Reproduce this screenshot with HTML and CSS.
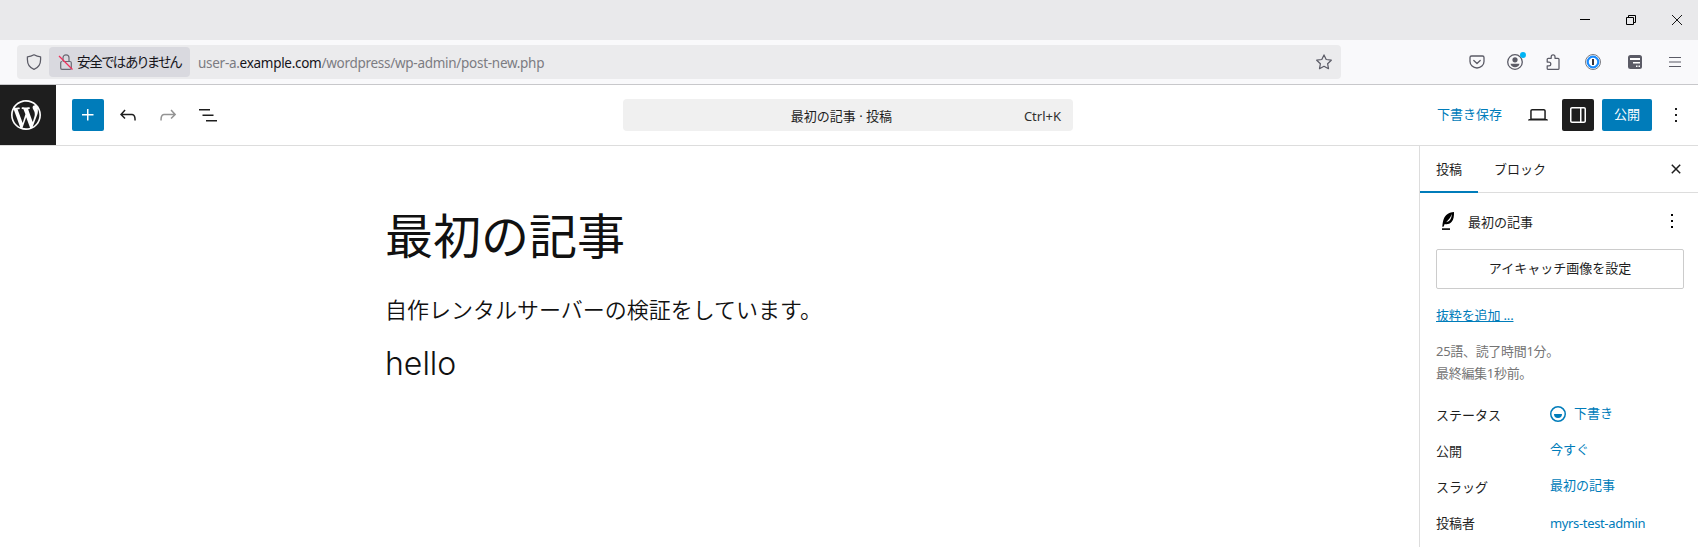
FILE: index.html
```html
<!DOCTYPE html>
<html lang="ja">
<head>
<meta charset="utf-8">
<title>最初の記事</title>
<link rel="stylesheet" href="styles.css">
</head>
<body>
<div class="titlebar">
  <svg width="10" height="10" viewBox="0 0 10 10"><path d="M0 4.5h10" stroke="#000"/></svg>
  <svg width="10" height="10" viewBox="0 0 10 10" fill="none" stroke="#000"><path d="M.5 2.5h7v7h-7zM2.500 2.500v-2h7v7h-2"/></svg>
  <svg width="10" height="10" viewBox="0 0 10 10" stroke="#000" stroke-width=".9"><path d="M0 0l10 10M10 0L0 10"/></svg>
</div>
<div class="navbar">
  <div class="address">
    <svg class="shield" width="16" height="16" viewBox="0 0 16 16" fill="none" stroke="#5b5b66" stroke-width="1.25" stroke-linejoin="round"><path d="M8 .8c2 1.200 4.200 1.900 6.600 2v2.700c0 4.300-2.400 8.300-6.600 9.800-4.200-1.500-6.600-5.500-6.600-9.800V2.800C3.800 2.700 6 2 8 .8z"/></svg>
    <div class="security">
      <svg width="16" height="16" viewBox="0 0 16 16" fill="none" stroke="#6a6a74" stroke-width="1.200"><path d="M5 7.500V3.800a3 3 0 0 1 6 0v3.700M5.500 7.500H12a1.300 1.300 0 0 1 1.300 1.300v5.200a1.300 1.300 0 0 1-1.300 1.300H4a1.300 1.300 0 0 1-1.300-1.300V8.800A1.300 1.300 0 0 1 4 7.500"/><path d="M1 2l13.500 13.500" stroke="#f0305c" stroke-width="1.300"/></svg>
      <span class="security-text">安全ではありません</span>
    </div>
    <span class="url">user-a.<b>example.com</b>/wordpress/wp-admin/post-new.php</span>
    <svg class="star" width="16" height="16" viewBox="0 0 16 16" fill="none" stroke="#5b5b66" stroke-width="1.200" stroke-linejoin="round"><path d="M8 .9l2.200 4.600 5.100.7-3.700 3.500.9 5L8 12.300l-4.500 2.400.9-5L.7 6.200l5.100-.7z"/></svg>
  </div>
  <div class="browser-tools">
    <svg width="16" height="16" viewBox="0 0 16 16" fill="none" stroke="#5b5b66" stroke-width="1.300" stroke-linecap="round" stroke-linejoin="round"><path d="M2.500 2h11a1.500 1.500 0 0 1 1.500 1.500V7.500a7 6.500 0 0 1-14 0v-4A1.500 1.500 0 0 1 2.500 2zM4.800 6.500L8 9.500l3.200-3"/></svg>
    <span class="account"><svg width="16" height="16" viewBox="0 0 16 16"><circle cx="8" cy="8" r="7.300" fill="none" stroke="#5b5b66" stroke-width="1.300"/><circle cx="8" cy="5.800" r="2.600" fill="#5b5b66"/><path d="M3.500 9.800h9c-.3 2-2.200 3.400-4.500 3.400s-4.200-1.400-4.500-3.400z" fill="#5b5b66"/></svg><i class="account-dot"></i></span>
    <svg width="16" height="16" viewBox="0 0 16 16" fill="none" stroke="#5b5b66" stroke-width="1.250" stroke-linejoin="round"><path d="M2.200 7V5.300a1 1 0 0 1 1-1h3V2.700a1.900 1.900 0 0 1 3.800 0v1.600h3a1 1 0 0 1 1 1v9.100a1 1 0 0 1-1 1H3.200a1 1 0 0 1-1-1v-2.600h1.700a1.900 1.900 0 0 0 0-3.800H2.200z"/></svg>
    <svg class="key" width="16" height="16" viewBox="0 0 16 16"><circle cx="8" cy="8" r="7.500" fill="#fff" stroke="#6a6a70" stroke-width=".9"/><circle cx="8" cy="8" r="5.300" fill="#fff" stroke="#1a8cff" stroke-width="2.200"/><rect x="7" y="5" width="2" height="6" fill="#33333d"/></svg>
    <svg class="form-tool" width="14" height="14" viewBox="0 0 14 14"><rect width="14" height="14" rx="2.500" fill="#5b5b66"/><path d="M2 3h10v2H2zM5 7h7v1.500H5zM8 10.500h1.500V12H8zM10.500 10.500H12V12h-1.500z" fill="#fff"/></svg>
    <svg class="app-menu" width="12" height="12" viewBox="0 0 12 12"><path d="M0 1.500h12M0 6h12M0 10.500h12" stroke="#5b5b66" stroke-width="1.200"/></svg>
  </div>
</div>
<header class="editor-header">
  <div class="wp-logo"><svg width="36" height="36" viewBox="-2 -2 24 24" fill="#fff"><path d="M20 10c0-5.510-4.490-10-10-10C4.480 0 0 4.490 0 10c0 5.520 4.480 10 10 10 5.510 0 10-4.480 10-10zM7.780 15.370L4.370 6.220c.55-.02 1.170-.08 1.170-.08.5-.06.44-1.130-.06-1.110 0 0-1.450.11-2.370.11-.18 0-.37 0-.58-.01C4.120 2.690 6.870 1.110 10 1.110c2.330 0 4.450.87 6.050 2.340-.68-.11-1.650.39-1.650 1.580 0 .74.45 1.360.9 2.100.35.61.55 1.360.55 2.460 0 1.490-1.400 5-1.400 5l-3.030-8.370c.54-.02.82-.17.82-.17.5-.05.44-1.250-.06-1.220 0 0-1.440.12-2.380.12-.87 0-2.330-.12-2.330-.12-.5-.03-.56 1.200-.06 1.220l.92.08 1.260 3.410zM17.410 10c.24-.64.74-1.870.43-4.250.7 1.290 1.050 2.710 1.050 4.250 0 3.290-1.730 6.240-4.400 7.780.97-2.590 1.940-5.200 2.920-7.780zM6.100 18.090C3.120 16.650 1.110 13.530 1.110 10c0-1.300.23-2.480.72-3.590C3.250 10.300 4.670 14.200 6.100 18.090zm4.030-6.630l2.580 6.980c-.86.29-1.760.45-2.710.45-.79 0-1.570-.11-2.290-.33.81-2.380 1.620-4.740 2.420-7.100z"/></svg></div>
  <div class="tools">
    <span class="btn primary"><svg width="24" height="24" viewBox="0 0 24 24"><path d="M11 12.500V17.500H12.500V12.500H17.500V11H12.500V6H11V11H6V12.500H11Z"/></svg></span>
    <span class="btn"><svg width="24" height="24" viewBox="0 0 24 24"><path d="M18.300 11.700c-.6-.6-1.400-.9-2.300-.9H6.700l2.900-3.300-1.100-1-4.500 5L8.500 16l1-1-2.700-2.700H16c.5 0 .9.2 1.300.5 1 1 1 3.400 1 4.500v.3h1.500v-.2c0-1.500 0-4.300-1.500-5.700z"/></svg></span>
    <span class="btn disabled"><svg width="24" height="24" viewBox="0 0 24 24"><path d="M15.600 6.500l-1.100 1 2.900 3.300H8c-.9 0-1.700.3-2.300.9-1.400 1.500-1.400 4.200-1.400 5.600v.2h1.500v-.3c0-1.100 0-3.500 1-4.500.3-.3.7-.5 1.300-.5h9.200L14.500 15l1.100 1.100 4.600-4.600-4.600-5z"/></svg></span>
    <span class="btn"><svg width="24" height="24" viewBox="0 0 24 24"><path d="M3 6h11v1.500H3V6Zm3.500 5.500h11V13h-11v-1.500ZM21 17H10v1.500h11V17Z"/></svg></span>
  </div>
  <div class="command"><span class="command-title">最初の記事 · 投稿</span><span class="shortcut">Ctrl+K</span></div>
  <div class="actions">
    <span class="save">下書き保存</span>
    <span class="btn"><svg width="24" height="24" viewBox="0 0 24 24"><path d="M20.500 16h-.7V8c0-1.100-.9-2-2-2H6.200c-1.100 0-2 .9-2 2v8h-.7c-.8 0-1.500.7-1.500 1.500h20c0-.8-.7-1.500-1.500-1.500zM5.700 8c0-.3.2-.5.5-.5h11.600c.3 0 .5.2.5.5v7.600H5.700V8z"/></svg></span>
    <span class="btn pressed"><svg width="24" height="24" viewBox="0 0 24 24"><path d="M18 4H6c-1.100 0-2 .9-2 2v12c0 1.100.9 2 2 2h12c1.100 0 2-.9 2-2V6c0-1.100-.9-2-2-2zm-4 14.500H6c-.3 0-.5-.2-.5-.5V6c0-.3.2-.5.5-.5h8v13zm4.500-.5c0 .3-.2.5-.5.5h-2.500v-13H18c.3 0 .5.2.5.5v12z"/></svg></span>
    <span class="btn publish">公開</span>
    <span class="btn"><svg width="24" height="24" viewBox="0 0 24 24"><path d="M13 19h-2v-2h2v2zm0-6h-2v-2h2v2zm0-6h-2V5h2v2z"/></svg></span>
  </div>
</header>
<div class="workspace">
  <main class="canvas">
    <h1 class="post-title">最初の記事</h1>
    <p class="paragraph">自作レンタルサーバーの検証をしています。</p>
    <h2 class="heading">hello</h2>
  </main>
  <aside class="sidebar">
    <div class="tabs">
      <span class="tab active">投稿</span><span class="tab">ブロック</span>
      <svg class="close" width="16" height="16" viewBox="0 0 16 16"><path d="M3.800 3.800l8.400 8.400M12.200 3.800l-8.400 8.400" stroke="#1e1e1e" stroke-width="1.500"/></svg>
    </div>
    <div class="panel">
      <div class="card">
        <svg class="quill" width="24" height="24" viewBox="0 0 24 24"><path d="M6.300 17.800c.5-4.300.8-8.700 4-11.800C12.300 4 15.500 3 18 3c.1 3.500-.2 7.500-2.500 10-1.800 2-4.300 2.500-6.800 2L7.500 17.800zM10.200 13.200c3.700-.7 5.600-4 5.500-8.200-1 3.500-3 5.700-5.500 8.200z" fill-rule="evenodd"/><path d="M6 19.300h8v1.600H6z"/></svg>
        <span class="card-title">最初の記事</span>
        <svg class="card-menu" width="24" height="24" viewBox="0 0 24 24"><path d="M13 19h-2v-2h2v2zm0-6h-2v-2h2v2zm0-6h-2V5h2v2z"/></svg>
      </div>
      <div class="featured">アイキャッチ画像を設定</div>
      <div class="excerpt"><span>抜粋を追加 ...</span></div>
      <div class="stats">25語、読了時間1分。<br>最終編集1秒前。</div>
      <div class="row"><span class="label">ステータス</span><span class="value"><svg class="status-icon" width="24" height="24" viewBox="0 0 24 24"><path fill-rule="evenodd" d="M12 18.500a6.500 6.500 0 1 1 0-13 6.500 6.500 0 0 1 0 13ZM4 12a8 8 0 1 1 16 0 8 8 0 0 1-16 0Zm8 4a4 4 0 0 0 4-4H8a4 4 0 0 0 4 4Z"/></svg>下書き</span></div>
      <div class="row"><span class="label">公開</span><span class="value">今すぐ</span></div>
      <div class="row"><span class="label">スラッグ</span><span class="value slug">最初の記事</span></div>
      <div class="row"><span class="label">投稿者</span><span class="value author">myrs-test-admin</span></div>
    </div>
  </aside>
</div>
</body>
</html>
```
FILE: styles.css
```css
* { box-sizing: border-box; }
body {
  margin: 0;
  width: 1698px;
  height: 547px;
  overflow: hidden;
  background: #fff;
  color: #1e1e1e;
  font: 13px/20px "Noto Sans", "Noto Sans CJK JP", sans-serif;
}
svg { display: block; flex: none; }
.titlebar {
  display: flex;
  justify-content: flex-end;
  align-items: center;
  gap: 36px;
  height: 40px;
  padding-right: 16px;
  background: #e9e9eb;
}
.navbar {
  display: flex;
  align-items: center;
  height: 45px;
  padding: 0 17px 1px;
  border-bottom: 1px solid #c8c8cb;
  background: #f9f9fb;
}
.address {
  display: flex;
  align-items: center;
  width: 1324px;
  height: 34px;
  padding: 0 9px;
  border-radius: 4px;
  background: #ebebed;
  font-size: 13.5px;
}
.security {
  display: flex;
  align-items: center;
  gap: 3px;
  width: 141px;
  height: 30px;
  margin-left: 7px;
  padding-left: 9px;
  border-radius: 4px;
  background: #d9d9df;
  color: #15141a;
  white-space: nowrap;
}
.security-text { padding-top: 1px; font-feature-settings: "palt"; letter-spacing: -1.2px; }
.url { margin: 3px 0 0 8px; color: #7c7c82; letter-spacing: -0.28px; }
.url b { color: #15141a; font-weight: 400; }
.star { margin-left: auto; }
.browser-tools {
  display: flex;
  align-items: center;
  gap: 22px;
  margin-left: auto;
}
.key { margin-left: 2px; }
.form-tool, .app-menu { margin-left: 5px; }
.account { position: relative; }
.account-dot {
  position: absolute;
  top: -2px;
  right: -3px;
  width: 6px;
  height: 6px;
  border-radius: 50%;
  background: #00b3f4;
}
.editor-header {
  display: flex;
  align-items: center;
  height: 61px;
  padding-bottom: 1px;
  border-bottom: 1px solid #ddd;
}
.wp-logo {
  width: 56px;
  height: 60px;
  padding: 12px 8px;
  background: #1e1e1e;
  align-self: flex-start;
}
.tools { display: flex; gap: 8px; width: 551px; padding-left: 16px; }
.btn {
  display: flex;
  align-items: center;
  justify-content: center;
  width: 32px;
  height: 32px;
  border-radius: 2px;
  fill: #1e1e1e;
}
.primary { background: #007cba; fill: #fff; }
.disabled { fill: #949494; }
.command {
  display: flex;
  align-items: center;
  width: 450px;
  height: 32px;
  margin-left: 16px;
  padding: 2px 12px 0;
  border-radius: 4px;
  background: #f0f0f0;
}
.command-title { flex: 1; padding-left: 24px; text-align: center; }
.shortcut { color: #2f2f2f; }
.actions {
  display: flex;
  align-items: center;
  gap: 8px;
  margin-left: auto;
  padding-right: 6px;
}
.save { margin-right: 12px; padding-bottom: 2px; color: #007cba; }
.pressed { background: #1e1e1e; fill: #fff; }
.publish { width: 50px; padding-bottom: 2px; background: #007cba; color: #fff; }
.workspace { display: flex; height: 401px; }
.canvas {
  flex: 1;
  padding: 62px 0 0 385px;
  color: #111;
}
.post-title { margin: 0; font-size: 48px; font-weight: 400; line-height: 56px; }
.paragraph { margin: 28px 0 0; font-size: 22px; font-weight: 350; line-height: 34px; }
.heading { margin: 18px 0 0; font: 300 32px/40px Inter, sans-serif; }
.sidebar { width: 279px; border-left: 1px solid #ddd; }
.tabs {
  display: flex;
  height: 47px;
  border-bottom: 1px solid #ddd;
}
.tab { height: 47px; padding: 13px 16px 0; }
.active { width: 58px; border-bottom: 2px solid #007cba; }
.close { margin: 15px 14px 0 auto; }
.panel { padding: 16px 14px 0 16px; }
.card { display: flex; height: 40px; }
.card-title { padding: 3px 0 0 8px; }
.card-menu { margin: 0 0 0 auto; }
.featured {
  height: 40px;
  border: 1px solid #ccc;
  border-radius: 2px;
  line-height: 36px;
  text-align: center;
}
.excerpt { margin-top: 16px; color: #007cba; letter-spacing: -0.15px; }
.excerpt span { text-decoration: underline; }
.stats { margin-top: 15px; color: #757575; letter-spacing: -0.3px; line-height: 22px; }
.row { display: flex; height: 36px; }
.stats + .row { margin-top: 20px; }
.label { width: 114px; padding-top: 1px; }
.value { display: flex; margin-top: -1px; color: #007cba; fill: #007cba; }
.status-icon { margin: -1px 4px 0 -4px; }
.author { margin-top: 1px; letter-spacing: -0.35px; }
```
